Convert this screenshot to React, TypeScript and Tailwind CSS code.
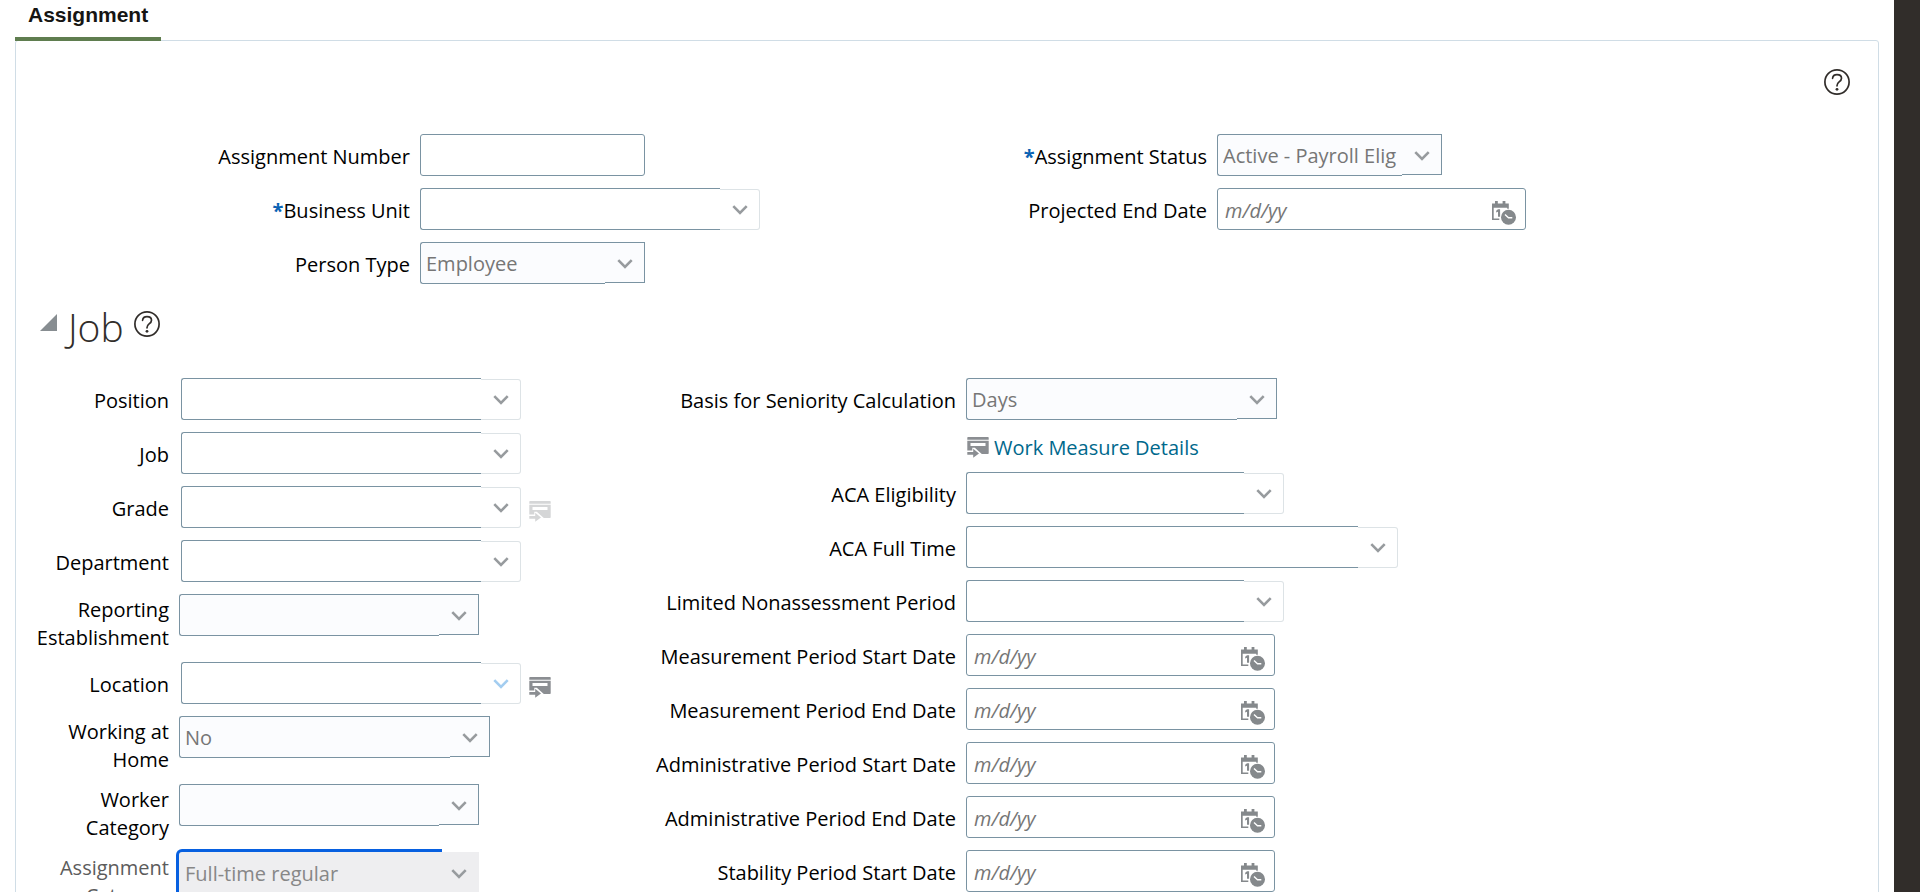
import { useId } from "react";
import type { ReactNode } from "react";

const BORDER = "border-[#7a93a2]";

function HelpIcon() {
  return (
    <svg className="size-[26px]" viewBox="0 0 26 26" fill="none" stroke="#312d2a" strokeLinecap="round">
      <circle cx="13" cy="13" r="12.1" strokeWidth="1.7" />
      <path d="M8.600 9.300C8.800 6.900 10.500 5.600 13 5.600c2.600 0 4.500 1.400 4.500 3.600 0 1.700-.9 2.600-2.400 3.700-1.500 1.100-2.100 1.900-2.100 3.900" strokeWidth="1.700" />
      <circle cx="13" cy="20.300" r="1.400" fill="#312d2a" stroke="none" />
    </svg>
  );
}

function Chevron({ className = "stroke-[#979b9e]" }: { className?: string }) {
  return (
    <svg className={`h-[10px] w-4 ${className}`} viewBox="0 0 16 10" fill="none" strokeWidth="2.600">
      <path d="M1.300 1.200 8 8l6.700-6.800" />
    </svg>
  );
}

function DetailIcon({ faded = false }: { faded?: boolean }) {
  return (
    <svg className={`h-[21px] w-[22px] ${faded ? "fill-[#d5d6d7]" : "fill-[#8b8e92]"}`} viewBox="0 0 22 21">
      <path d="M1 0h20a.7.7 0 0 1 .7.7v2H.3v-2A.7.7 0 0 1 1 0Z" />
      <path fillRule="evenodd" d="M.3 3.700h21.400v12.600a.7.7 0 0 1-.7.7h-6.200L7.800 10.800H5.300v2.700H.3ZM3.500 6.100v3h15v-3Z" />
      <path d="M.3 14.900h5.900v-3.100l5.800 4.700-5.800 4.300v-3H.3Z" />
    </svg>
  );
}

function CalendarClockIcon() {
  return (
    <svg className="size-6" viewBox="0 0 24 24" fill="#85898c">
      <path d="M3 0h2.800v2.500h4.800V0h2.800v2.500h3.400v5.300h-1.600V6.800H1.700v10.600h5.600V19H0V2.500h3Z" />
      <path d="M6 8.300h2.100v7.500H6v-5L4.200 11.500V9.700Z" />
      <circle cx="16.500" cy="16.300" r="7.500" />
      <path d="m13 13.600 3.500 3.200h3.800" fill="none" stroke="#fff" strokeWidth="1.400" />
    </svg>
  );
}

function Row({ id, label, required, narrow, muted, children }: {
  id: string;
  label: string;
  required?: boolean;
  narrow?: boolean;
  muted?: boolean;
  children: ReactNode;
}) {
  const twoLines = narrow && label.includes(" ");
  return (
    <div className="flex min-h-[54px] items-start gap-[10px] pb-[10px]">
      <label
        htmlFor={id}
        className={`shrink-0 text-right ${narrow ? "w-[153px] pl-4" : "w-[394px]"} ${twoLines ? "pt-0.5" : "pt-[9px]"} ${muted ? "text-[#5c5c5c]" : "text-black"}`}
      >
        {required && <span className="font-bold text-[#0a63b4]">*</span>}
        {label}
      </label>
      {children}
    </div>
  );
}

type FieldProps = { label: string; width: string; required?: boolean; narrow?: boolean };

function TextField({ label, width }: FieldProps) {
  const id = useId();
  return (
    <Row id={id} label={label}>
      <input id={id} type="text" className={`h-[42px] rounded-[3px] border bg-white px-2 ${BORDER} ${width}`} />
    </Row>
  );
}

function ComboField({ label, width, required, narrow, active, extra }: FieldProps & { active?: boolean; extra?: ReactNode }) {
  const id = useId();
  return (
    <Row id={id} label={label} required={required} narrow={narrow}>
      <div className={`flex items-end ${narrow ? "ml-0.5" : ""}`}>
        <input id={id} type="text" className={`h-[42px] rounded-l-[3px] border-y border-l bg-white px-2 ${BORDER} ${width}`} />
        <button type="button" aria-label={`Search ${label}`} className="flex h-[41px] w-10 items-center justify-center rounded-r-[3px] border-y border-r border-[#dde3e6] pt-px">
          <Chevron className={active ? "stroke-[#a3cdf0]" : "stroke-[#979b9e]"} />
        </button>
        {extra}
      </div>
    </Row>
  );
}

function SelectField({ label, width, required, narrow, value = "", focused }: FieldProps & { value?: string; focused?: boolean }) {
  const id = useId();
  return (
    <Row id={id} label={label} required={required} narrow={narrow} muted={focused}>
      <div className="flex items-start">
        <select
          id={id}
          className={`h-[42px] appearance-none rounded-l-[3px] pt-0.5 outline-none ${width} ${
            focused ? "bg-[#eeeef0] pl-[6px] text-[#878787] shadow-[0_0_0_3px_#0760e0]" : `border-y border-l bg-[#fbfcfe] pl-[5px] text-[#767676] ${BORDER}`
          }`}
        >
          <option>{value}</option>
        </select>
        <span className={`pointer-events-none relative flex h-[41px] w-10 items-center justify-center pt-0.5 ${focused ? "bg-[#eeeef0]" : `border-y border-r bg-[#fbfcfe] ${BORDER}`}`}>
          <Chevron />
        </span>
      </div>
    </Row>
  );
}

function DateField({ label }: { label: string }) {
  const id = useId();
  return (
    <Row id={id} label={label}>
      <div className={`flex h-[42px] w-[309px] items-center rounded-[3px] border bg-white pr-[9px] pl-[7px] ${BORDER}`}>
        <input id={id} type="text" placeholder="m/d/yy" className="min-w-0 flex-1 bg-transparent pt-1 outline-none placeholder:text-[#767676] placeholder:italic" />
        <button type="button" aria-label={`Pick ${label}`} className="mt-2">
          <CalendarClockIcon />
        </button>
      </div>
    </Row>
  );
}

export default function App() {
  return (
    <div className="flex h-screen overflow-hidden bg-[#312d2a] pr-[26px] font-['Open_Sans','Noto_Sans',sans-serif] text-[20px] leading-7">
      <main className="flex min-w-0 flex-1 flex-col bg-white px-[15px]">
        <div role="tablist" className="relative z-10 flex h-10 shrink-0">
          <button
            type="button"
            role="tab"
            aria-selected="true"
            className="h-[41px] border-b-4 border-[#5f7d4f] px-[13px] pb-2 font-['Liberation_Sans',sans-serif] text-[21px] leading-[29px] font-bold text-[#161513]"
          >
            Assignment
          </button>
        </div>

        <div className="shrink-0 rounded-t-[3px] border border-[#d0dde6]">
          <div className="flex h-[93px] justify-end pt-7 pr-7">
            <button type="button" aria-label="Help" className="size-[26px]">
              <HelpIcon />
            </button>
          </div>

          <div className="grid grid-cols-[797fr_1065fr]">
            <div>
              <TextField label="Assignment Number" width="w-[225px]" />
              <ComboField label="Business Unit" width="w-[300px]" required />
              <SelectField label="Person Type" width="w-[185px]" value="Employee" />
            </div>
            <div>
              <SelectField label="Assignment Status" width="w-[185px]" value="Active - Payroll Elig" required />
              <DateField label="Projected End Date" />
            </div>
          </div>

          <div className="flex h-[82px] items-start pt-[15px] pl-6">
            <button type="button" aria-label="Collapse Job" className="mt-[3px] mr-[11px]">
              <svg className="size-[17px]" viewBox="0 0 17 17" fill="#878d91">
                <path d="M17 0v17H0Z" />
              </svg>
            </button>
            <h2 className="mr-[10px] font-['Open_Sans',sans-serif] text-[39px] leading-8 font-light text-[#312d2a]">Job</h2>
            <button type="button" aria-label="Job help" className="size-[26px]">
              <HelpIcon />
            </button>
          </div>

          <div className="grid grid-cols-[546fr_1316fr]">
            <div>
              <ComboField label="Position" width="w-[300px]" narrow />
              <ComboField label="Job" width="w-[300px]" narrow />
              <ComboField
                label="Grade"
                width="w-[300px]"
                narrow
                extra={
                  <button type="button" disabled aria-label="Grade details" className="mb-[6px] ml-2">
                    <DetailIcon faded />
                  </button>
                }
              />
              <ComboField label="Department" width="w-[300px]" narrow />
              <SelectField label="Reporting Establishment" width="w-[260px]" narrow />
              <ComboField
                label="Location"
                width="w-[300px]"
                narrow
                active
                extra={
                  <button type="button" aria-label="Location details" className="mb-[6px] ml-2">
                    <DetailIcon />
                  </button>
                }
              />
              <SelectField label="Working at Home" width="w-[271px]" value="No" narrow />
              <SelectField label="Worker Category" width="w-[260px]" narrow />
              <SelectField label="Assignment Category" width="w-[260px]" value="Full-time regular" narrow focused />
            </div>
            <div>
              <SelectField label="Basis for Seniority Calculation" width="w-[271px]" value="Days" />
              <div className="flex h-10 items-start pl-[405px]">
                <a href="#work-measure-details" className="flex items-start gap-[5px] text-[#00688c]">
                  <span className="pt-[5px]">
                    <DetailIcon />
                  </span>
                  <span className="pt-0.5">Work Measure Details</span>
                </a>
              </div>
              <ComboField label="ACA Eligibility" width="w-[278px]" />
              <ComboField label="ACA Full Time" width="w-[392px]" />
              <ComboField label="Limited Nonassessment Period" width="w-[278px]" />
              <DateField label="Measurement Period Start Date" />
              <DateField label="Measurement Period End Date" />
              <DateField label="Administrative Period Start Date" />
              <DateField label="Administrative Period End Date" />
              <DateField label="Stability Period Start Date" />
            </div>
          </div>
        </div>
      </main>
    </div>
  );
}
